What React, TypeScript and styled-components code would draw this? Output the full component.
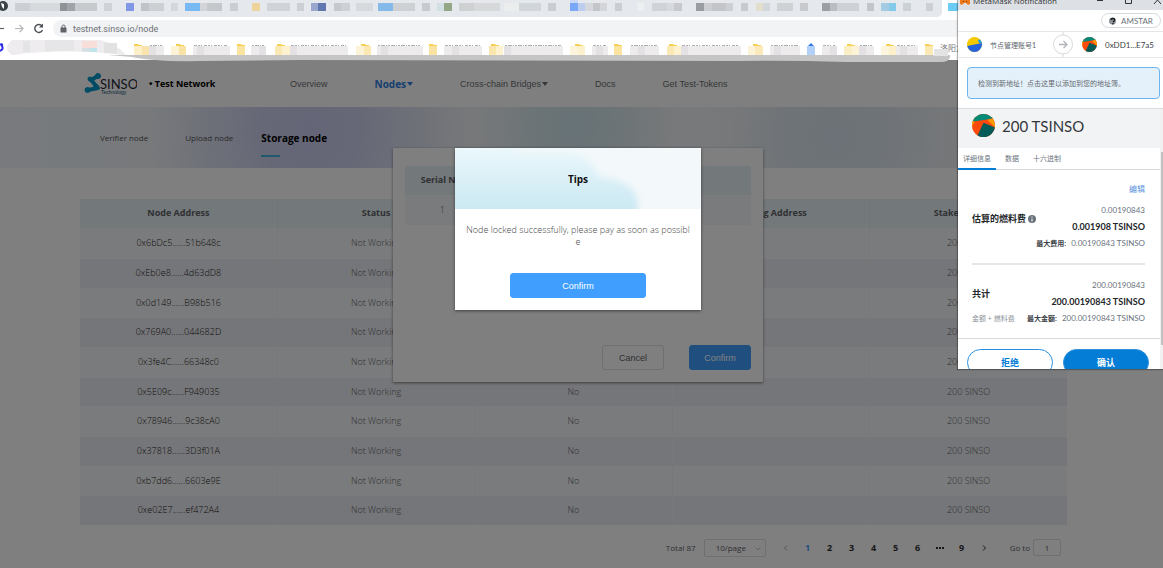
import React from "react";
import styled, { createGlobalStyle, css } from "styled-components";

const GlobalStyle = createGlobalStyle`
  * { box-sizing: border-box; }
  body {
    margin: 0;
    background: #fff;
    font-family: "Open Sans", "Noto Sans CJK SC", sans-serif;
    font-size: 9px;
    line-height: 12px;
    color: #606266;
  }
  button, input, select { font: inherit; color: inherit; margin: 0; }
  a { color: inherit; text-decoration: none; }
`;

const ui = `"Liberation Sans", Arial, sans-serif`;

/* ---------- shell ---------- */

const Screen = styled.div`
  position: relative;
  min-height: 100vh;
  display: flex;
  flex-direction: column;
  overflow: hidden;
`;

/* ---------- browser chrome ---------- */

const Chrome = styled.header`
  position: relative;
  height: 60px;
  display: flex;
  flex-direction: column;
  background: #fff;
`;

const TabStrip = styled.div`
  height: 17px;
  width: 81%;
  background: #e5e8ec;
  border-bottom-right-radius: 5px;
`;

const AddressRow = styled.div`
  display: flex;
  align-items: center;
  height: 17px;
  margin-top: 3px;
`;

const NavIcons = styled.div`
  width: 53px;
  height: 17px;
  flex: none;
`;

const AddressField = styled.label`
  flex: 1;
  display: flex;
  align-items: center;
  gap: 6px;
  height: 17px;
  padding-left: 7px;
  border-radius: 9px 0 0 9px;
  background: #f1f3f4;
`;

const Url = styled.input`
  width: 300px;
  border: 0;
  padding: 0;
  background: transparent;
  font-family: Roboto, sans-serif;
  color: #6d7074;
`;

const ChromeDrawing = styled.svg`
  position: absolute;
  left: 0;
  top: 0;
  pointer-events: none;
  z-index: 2;
`;

type Block = [number, number, string];

const tabBlocks: Block[] = [
  [15, 15, "#ccd0d4"], [30, 30, "#d7dadd"], [60, 7, "#8f9396"], [67, 8, "#a0a4a8"], [75, 22, "#c8cbce"],
  [104, 8, "#cfd2d6"], [126, 8, "#8297e6"], [141, 8, "#bfc4c9"], [149, 15, "#ccd0d3"], [171, 7, "#d5d7da"],
  [185, 15, "#78b8f3"], [200, 7, "#d3d5d9"], [207, 15, "#c4c8ca"], [230, 8, "#cbcdd0"], [252, 8, "#eed49a"],
  [267, 23, "#d0d3d7"], [297, 7, "#cccfd3"], [311, 7, "#9aa8cf"], [318, 8, "#6077b0"], [334, 7, "#c5c8cc"],
  [341, 9, "#ced1d4"], [356, 17, "#d7dadd"], [378, 15, "#84b9ea"], [393, 22, "#cdd1d4"], [422, 8, "#c8cbce"],
  [437, 7, "#d2dfe4"], [444, 8, "#93a786"], [459, 15, "#ced0d2"], [474, 26, "#d6d8da"], [504, 15, "#eceded"],
  [519, 22, "#d0d6da"], [548, 8, "#cbcdd1"], [570, 8, "#7aa8f8"], [578, 7, "#bccdf0"], [585, 8, "#d5d8dc"],
  [593, 7, "#c3c5c8"], [600, 7, "#d3d5d9"], [615, 7, "#cacdd1"], [637, 7, "#edeeef"], [652, 15, "#d0d4d9"],
  [667, 8, "#d7d9de"], [674, 8, "#c7c9cc"], [696, 8, "#999da2"], [704, 8, "#cbcdd1"], [712, 14, "#c3c5c9"],
  [726, 7, "#cecfd3"], [741, 7, "#c8cacf"], [756, 7, "#e3dfcf"], [763, 7, "#d2d7da"], [777, 16, "#cfd2d5"],
  [800, 8, "#c8cacd"], [822, 8, "#9b9fa3"], [830, 7, "#bbbdc1"], [837, 22, "#ced1d5"], [867, 7, "#c4c5c9"],
  [881, 8, "#a3cbe2"], [889, 7, "#84cbea"], [903, 8, "#cbd1d4"], [926, 7, "#cdd0d3"], [948, 10, "#6dccf5"],
];

const folders = [134, 176, 237, 277, 361, 429, 491, 575, 614, 669, 753, 847, 886, 925];

const folderMosaic: Block[] = [
  [134, 8, "#fdf0c8"], [142, 7, "#fae4ae"], [171, 8, "#fdf3d6"], [179, 7, "#f9e3a4"], [237, 8, "#fbe3a0"],
  [275, 7, "#fbe9b4"], [282, 8, "#fdf1cf"], [356, 8, "#fdf4d7"], [364, 7, "#fbe8b2"], [429, 8, "#fae3a2"],
  [489, 7, "#fbe7ae"], [496, 7, "#fdf1cf"], [570, 8, "#fdf4dc"], [578, 7, "#fdf0cc"], [614, 8, "#fbe3a0"],
  [667, 7, "#fbe9b4"], [674, 7, "#fdf1cf"], [748, 7, "#fdf3d6"], [755, 8, "#fbe9bb"], [807, 8, "#b2d0f8"],
  [844, 8, "#fbefc6"], [852, 7, "#fdf3d9"], [881, 8, "#fdf6df"], [889, 7, "#fdf0ca"], [925, 8, "#fbe9b3"],
];

const labelMosaic: [number, number][] = [
  [149, 15], [193, 37], [251, 15], [290, 58], [377, 46], [444, 38], [504, 59], [592, 16], [630, 29],
  [681, 60], [770, 30], [822, 15], [859, 15], [896, 22],
];

const BrowserDrawing = () => (
  <ChromeDrawing width="958" height="66" viewBox="0 0 958 66" aria-hidden="true">
    <circle cx="3" cy="6" r="5" fill="#3b4348" />
    <path d="M1 3l3 1v5l-2-2z" fill="#fff" />
    {tabBlocks.map(([x, w, c]) => (
      <rect key={x} x={x} y="3" width={w} height="8" fill={c} />
    ))}
    <rect x="570" y="0" width="8" height="3" fill="#c9d8f6" />
    <path d="M-1 45q4-2 3 1q2 4-3 5" stroke="#2b2bea" strokeWidth="2" fill="none" />
    <path d="M12 40H100q16 3 26 15H12q-10-7 0-15z" fill="#eeecee" />
    <rect x="23" y="41" width="7" height="11" fill="#e4e3e6" />
    <rect x="45" y="40" width="29" height="12" fill="#e6e5e7" />
    <rect x="82" y="41" width="15" height="7" fill="#f8ded9" />
    <rect x="82" y="48" width="8" height="4" fill="#d5dfe4" />
    <rect x="90" y="48" width="7" height="4" fill="#bfe4ea" />
    <rect x="104" y="43" width="13" height="12" fill="#e3e2e3" />
    <path d="M14 55q48-7 102-1q14 3 28 6H14z" fill="#fff" />
    <path d="M108 55H950v2q-1 5-9 5H846q-60-2-110-1L300 60l-100 1q-45 1-68-4z" fill="#c5c5c5" />
    {folders.map((x) => (
      <path key={x} d={`M${x} 47v-3h4l1 1h3v2z`} fill="#f6cf55" />
    ))}
    <path d="M807 47l4-4 4 4z" fill="#3579e8" />
    {folderMosaic.map(([x, w, c]) => (
      <rect key={x} x={x} y="46" width={w} height="9" fill={c} />
    ))}
    {labelMosaic.map(([x, w], i) => (
      <g key={x}>
        <path
          d={`M${x + 1} 45.500H${x + w - 2}`}
          stroke="#aeaeb1"
          strokeDasharray={i % 2 ? "3 1 2 1 1 2" : "2 1 4 1 1 1"}
        />
        <rect x={x} y="46" width={w} height="9" fill="#edebec" />
        <rect x={x + (i % 3) * 4} y="46" width="7" height="9" fill="#e3e1e3" />
      </g>
    ))}
    <text x="940" y="51" fontSize="8" fill="#77777a">洛阳大</text>
    <rect x="934" y="49" width="14" height="7" fill="#e4e3e4" />
  </ChromeDrawing>
);

/* ---------- site ---------- */

const Site = styled.main`
  position: relative;
  flex: 1;
  display: flex;
  flex-direction: column;
  background: #fff;
`;

const SiteHeader = styled.div`
  display: flex;
  align-items: center;
  height: 47px;
  padding-left: 84px;
`;

const NetworkName = styled.strong`
  width: 141px;
  margin-left: 12px;
  font-weight: 700;
  color: #000;
  white-space: nowrap;
`;

const Nav = styled.nav`
  display: flex;
  align-items: center;
  gap: 47px;
  font-family: ${ui};
`;

const NavLink = styled.a<{ $active?: boolean }>`
  display: flex;
  align-items: center;
  gap: 1px;
  white-space: nowrap;
  color: #6d6f72;
  ${(p) => p.$active && css`
    font-family: "Open Sans", sans-serif;
    font-size: 10px;
    font-weight: 700;
    color: #2f80e0;
  `}
`;

const Banner = styled.nav`
  display: flex;
  align-items: center;
  height: 61px;
  padding-left: 100px;
  background:
    radial-gradient(circle 160px at 310px 24px, #c8ccee 0, #cdd0ee 30%, transparent 100%),
    radial-gradient(circle 100px at 575px 20px, #cfe6ee 0, #d6e7ed 35%, transparent 100%),
    radial-gradient(circle 110px at 835px 30px, #dbe5f0 0, #dce6ef 40%, transparent 100%),
    linear-gradient(90deg, #f0f5fa, #ecf0f3 30%, #f0f2f4 60%, #e4eaf0);
`;

const BannerLink = styled.a<{ $active?: boolean }>`
  position: relative;
  margin-right: 37px;
  font-size: 8px;
  color: #555;
  white-space: nowrap;
  ${(p) => p.$active && css`
    margin-left: -9px;
    font-size: 10px;
    font-weight: 700;
    color: #000;
    &::after {
      content: "";
      position: absolute;
      left: 0;
      bottom: -13px;
      width: 19px;
      height: 2px;
      background: #40b4dc;
    }
  `}
`;

const Content = styled.section`
  padding: 31px 96px 0 80px;
`;

const DataTable = styled.table`
  width: 100%;
  table-layout: fixed;
  border-collapse: collapse;
  text-align: center;
`;

const Th = styled.th`
  height: 29px;
  padding: 0;
  font-weight: 700;
  color: #606266;
  background: #e6f0f6;
  white-space: nowrap;
  & + & { border-left: 1px solid #e2eaf0; }
`;

const Row = styled.tr`
  height: 30px;
  background: #f5f7f9;
  border-top: 1px solid #f8f9fb;
  &:nth-child(even) { background: #ebecf2; }
  &:nth-child(3n) { height: 29px; }
`;

const Td = styled.td<{ $strong?: boolean }>`
  padding: 0;
  font-weight: 300;
  color: ${(p) => (p.$strong ? "#222" : "#606266")};
  & + & { border-left: 1px solid #edf0f5; }
`;

const Pagination = styled.div`
  display: flex;
  align-items: center;
  justify-content: flex-end;
  height: 19px;
  margin-top: 13px;
  padding-right: 6px;
  font-size: 8px;
`;

const PageSize = styled.div`
  position: relative;
  margin: 0 9px 0 8px;
  svg { position: absolute; right: 5px; top: 7px; }
`;

const SizeSelect = styled.select`
  appearance: none;
  display: block;
  width: 62px;
  height: 18px;
  padding: 0 12px 0 11px;
  border: 1px solid #dcdfe6;
  border-radius: 2px;
  background: #fff;
`;

const PageButton = styled.button<{ $active?: boolean }>`
  width: 22px;
  height: 18px;
  padding: 0;
  border: 0;
  background: transparent;
  font-size: 9px;
  font-weight: 700;
  color: ${(p) => (p.$active ? "#409eff" : "#303133")};
`;

const Goto = styled.label`
  display: flex;
  align-items: center;
  gap: 3px;
  margin-left: 15px;
`;

const PageInput = styled.input`
  width: 28px;
  height: 17px;
  padding: 0;
  border: 1px solid #dcdfe6;
  border-radius: 2px;
  text-align: center;
`;

/* ---------- dialogs ---------- */

const Layer = styled.div`
  position: absolute;
  inset: 0;
  display: flex;
  justify-content: center;
  align-items: flex-start;
  padding: 88px 7px 0 0;
`;

const Shade = styled.div`
  position: absolute;
  inset: 0;
  background: rgba(0, 0, 0, 0.5);
`;

const OrderDialog = styled.section`
  display: flex;
  flex-direction: column;
  width: 370px;
  padding: 18px 12px 12px;
  background: #fff;
  border-radius: 1px;
  box-shadow: 0 1px 3px rgba(0, 0, 0, 0.5);
`;

const Actions = styled.div`
  display: flex;
  justify-content: flex-end;
  gap: 25px;
  margin-top: 120px;
`;

const Button = styled.button<{ $primary?: boolean; $wide?: boolean }>`
  width: ${(p) => (p.$wide ? "136px" : "62px")};
  height: 25px;
  padding: 0;
  border: 1px solid ${(p) => (p.$primary ? "#409eff" : "#dcdfe6")};
  border-radius: 3px;
  background: ${(p) => (p.$primary ? "#409eff" : "#fff")};
  color: ${(p) => (p.$primary ? "#fff" : "#606266")};
  font-family: ${ui};
`;

const TipsDialog = styled.section`
  width: 246px;
  padding-bottom: 12px;
  background: #fff;
  box-shadow: 0 1px 3px rgba(0, 0, 0, 0.5);
  display: flex;
  flex-direction: column;
  align-items: center;
`;

const TipsHead = styled.div`
  position: relative;
  width: 100%;
  height: 61px;
  display: flex;
  align-items: center;
  justify-content: center;
  background: #f3f8fa;
  svg { position: absolute; inset: 0; }
`;

const TipsTitle = styled.h2`
  position: relative;
  margin: 0;
  font-size: 10px;
  font-weight: 700;
  color: #111;
`;

const TipsText = styled.p`
  width: 226px;
  margin: 15px 0 25px;
  text-align: center;
  word-break: break-all;
  font-weight: 300;
  color: #444;
`;

/* ---------- wallet ---------- */

const Wallet = styled.aside`
  position: absolute;
  z-index: 5;
  top: 0;
  right: 0;
  width: 205px;
  height: 369px;
  overflow: hidden;
  display: flex;
  flex-direction: column;
  background: #fff;
  box-shadow: 0 0 1px 1px rgba(0, 0, 0, 0.3);
  font-family: Lato, "Noto Sans CJK SC", sans-serif;
  font-size: 8px;
  line-height: 10px;
  color: #6a737d;
`;

const TitleBar = styled.div`
  flex: none;
  display: flex;
  align-items: flex-start;
  height: 10px;
  padding-left: 2px;
  background: #dde1e6;
  color: #333;
  font-family: "Open Sans", sans-serif;
  svg { flex: none; }
`;

const WindowTitle = styled.span`
  flex: 1;
  margin: -4px 0 0 3px;
`;

const NetworkRow = styled.div`
  flex: none;
  display: flex;
  justify-content: flex-end;
  height: 21px;
  padding: 3px 2px 0 0;
`;

const NetworkPill = styled.button`
  display: flex;
  align-items: center;
  justify-content: center;
  gap: 5px;
  width: 60px;
  height: 15px;
  padding: 0;
  border: 1px solid #d6d9dc;
  border-radius: 8px;
  background: #fff;
`;

const AccountRow = styled.div`
  flex: none;
  display: flex;
  align-items: center;
  height: 27px;
  padding-left: 9px;
  border-top: 1px solid #e4e6e9;
  border-bottom: 1px solid #e4e6e9;
  svg { flex: none; }
`;

const AccountName = styled.span<{ $own?: boolean }>`
  width: ${(p) => (p.$own ? "63px" : "auto")};
  margin-left: 8px;
  color: ${(p) => (p.$own ? "#5d646b" : "#3c4248")};
  font-size: ${(p) => (p.$own ? "7px" : "8px")};
`;

const Recipient = styled.div`
  display: flex;
  align-items: center;
  margin-left: 9px;
`;

const Notice = styled.button`
  flex: none;
  height: 32px;
  margin: 9px 3px 9px 9px;
  padding: 0 10px;
  border: 1px solid #6cb4ee;
  border-radius: 4px;
  background: #e5f1fa;
  font-size: 7px;
  text-align: left;
  white-space: nowrap;
  color: #62686e;
`;

const Body = styled.div`
  flex: none;
  position: relative;
  border-top: 1px solid #d9dcdf;
`;

const ScrollTrack = styled.div`
  position: absolute;
  top: 0;
  right: 0;
  bottom: 0;
  width: 3px;
  padding: 43px 0 0 1px;
  background: #f1f1f1;
`;

const ScrollThumb = styled.div`
  height: 193px;
  background: #c1c1c1;
`;

const Amount = styled.div`
  display: flex;
  align-items: center;
  gap: 7px;
  height: 39px;
  padding: 0 0 6px 14px;
  background: #f2f3f5;
  font-size: 15px;
  line-height: 20px;
  color: #33373c;
`;

const Tabs = styled.div`
  display: flex;
  height: 22px;
  margin-right: 3px;
  border-bottom: 1px solid #d6d9dc;
  font-size: 7px;
`;

const Tab = styled.button<{ $active?: boolean }>`
  height: 22px;
  padding: 0 5px;
  margin-right: 4px;
  border: 0;
  border-bottom: 2px solid ${(p) => (p.$active ? "#037dd6" : "transparent")};
  background: transparent;
`;

const Details = styled.div`
  padding: 14px 18px 0 14px;
`;

const EditLink = styled.a`
  display: block;
  text-align: right;
  color: #5b93dc;
`;

const CostBlock = styled.div<{ $ruled?: boolean }>`
  display: grid;
  grid-template-columns: auto 1fr;
  grid-template-rows: 16px 17px 16px;
  align-items: center;
  margin-top: ${(p) => (p.$ruled ? "8px" : "12px")};
  padding-bottom: 12px;
  text-align: right;
  white-space: nowrap;
  ${(p) => p.$ruled && css`border-bottom: 2px solid #e4e6e9;`}
`;

const CostLabel = styled.div`
  grid-row: 1 / 3;
  display: flex;
  align-items: center;
  gap: 2px;
  font-size: 9px;
  font-weight: 700;
  color: #24272a;
`;

const CostTotal = styled.strong`
  grid-column: 2;
  font-size: 9px;
  color: #24272a;
`;

const CostSide = styled.span`
  grid-column: 1;
  font-size: 7px;
  color: #8b9299;
`;

const CostMax = styled.span`
  grid-column: 2;
  b { margin-right: 5px; font-size: 7px; color: #3c4248; }
`;

const WalletActions = styled.div`
  display: flex;
  gap: 10px;
  padding: 10px 14px 8px 9px;
  border-top: 1px solid #d6d9dc;
`;

const RoundButton = styled.button<{ $primary?: boolean }>`
  flex: 1;
  height: 27px;
  padding: 0;
  border: 1px solid #2b8fdd;
  border-radius: 14px;
  background: ${(p) => (p.$primary ? "#037dd6" : "#fff")};
  color: ${(p) => (p.$primary ? "#fff" : "#037dd6")};
  font-size: 9px;
  font-weight: 700;
`;

/* ---------- drawings ---------- */

const Logo = () => (
  <svg width="53" height="24" viewBox="0 0 53 24" role="img" aria-label="SINSO Technology">
    <g fill="#0098c8" stroke="#0098c8">
      <path d="M14 4L7 8l7 8-10 2" fill="none" strokeWidth="4" strokeLinejoin="round" />
      <circle cx="14" cy="4" r="2.500" />
      <circle cx="6" cy="7" r="2" />
      <circle cx="12" cy="15" r="2.500" />
      <circle cx="3.500" cy="18" r="2.500" />
    </g>
    <text x="16" y="17" fontSize="13" fontFamily="Lato, sans-serif" fill="#1d2733">SINSO</text>
    <text x="17" y="22" fontSize="5" fontFamily="Liberation Sans, sans-serif" fill="#0f4f78">Technology</text>
  </svg>
);

const Caret = () => (
  <svg width="6" height="4" viewBox="0 0 6 4" aria-hidden="true">
    <path d="M0 0h6L3 4z" fill="currentColor" />
  </svg>
);

const Chevron = ({ d, color }: { d: string; color: string }) => (
  <svg width="6" height="6" viewBox="0 0 6 6" aria-hidden="true">
    <path d={d} fill="none" stroke={color} />
  </svg>
);

const SunsetIcon = ({ size }: { size: number }) => (
  <svg width={size} height={size} viewBox="0 0 24 24" aria-hidden="true">
    <clipPath id={`disc${size}`}><circle cx="12" cy="12" r="12" /></clipPath>
    <g clipPath={`url(#disc${size})`}>
      <rect width="24" height="24" fill="#fb4a0b" />
      <path d="M16 6l8-2v10z" fill="#f99a05" />
      <path d="M0 0h24v4L14 6 0 8z" fill="#068a78" />
      <path d="M0 7l3 1-3 5z" fill="#f99a05" />
      <path d="M12 9l12 5v10H5z" fill="#055b58" />
    </g>
  </svg>
);

const OwnerIcon = () => (
  <svg width="15" height="15" viewBox="0 0 15 15" aria-hidden="true">
    <clipPath id="owner"><circle cx="7.5" cy="7.5" r="7.5" /></clipPath>
    <g clipPath="url(#owner)">
      <rect width="15" height="15" fill="#f5c800" />
      <path d="M0 9l15-3v9H0z" fill="#2463e0" />
      <path d="M11 3l4-1v4l-3 0z" fill="#18a0e8" />
    </g>
  </svg>
);

/* ---------- data ---------- */

const nodes = [
  "0x6bDc5......51b648c", "0xEb0e8......4d63dD8", "0x0d149......B98b516", "0x769A0......044682D",
  "0x3fe4C......66348c0", "0x5E09c......F949035", "0x78946......9c38cA0", "0x37818......3D3f01A",
  "0xb7dd6......6603e9E", "0xe02E7......ef472A4",
];

export default function App() {
  return (
    <Screen>
      <GlobalStyle />
      <Chrome>
        <TabStrip />
        <AddressRow>
          <NavIcons>
            <svg width="53" height="17" viewBox="0 0 53 17" fill="none" aria-hidden="true">
              <path d="M0 8.500h4" stroke="#5f6368" strokeWidth="1.200" />
              <path d="M15 8.500h8M19.500 5l3.500 3.500-3.500 3.500" stroke="#b4b6b9" strokeWidth="1.200" />
              <path d="M42 6a4 4 0 1 0 .5 4" stroke="#4a4e52" strokeWidth="1.400" />
              <path d="M43 3.500v4h-4z" fill="#4a4e52" />
            </svg>
          </NavIcons>
          <AddressField>
            <svg width="7" height="9" viewBox="0 0 7 9" aria-hidden="true">
              <rect x="0.500" y="3.500" width="6" height="5" rx="0.500" fill="#5f6368" />
              <path d="M2 4V2.500a1.500 1.500 0 0 1 3 0V4" fill="none" stroke="#5f6368" />
            </svg>
            <Url aria-label="Address" defaultValue="testnet.sinso.io/node" />
          </AddressField>
        </AddressRow>
        <BrowserDrawing />
      </Chrome>

      <Site>
        <SiteHeader>
          <Logo />
          <NetworkName>• Test Network</NetworkName>
          <Nav>
            <NavLink href="#">Overview</NavLink>
            <NavLink href="#" $active>Nodes<Caret /></NavLink>
            <NavLink href="#">Cross-chain Bridges<Caret /></NavLink>
            <NavLink href="#">Docs</NavLink>
            <NavLink href="#">Get Test-Tokens</NavLink>
          </Nav>
        </SiteHeader>
        <Banner>
          <BannerLink href="#">Verifier node</BannerLink>
          <BannerLink href="#">Upload node</BannerLink>
          <BannerLink href="#" $active>Storage node</BannerLink>
        </Banner>
        <Content>
          <DataTable>
            <thead>
              <tr>
                <Th>Node Address</Th>
                <Th>Status</Th>
                <Th>Locked</Th>
                <Th>Staking Address</Th>
                <Th>Staked Amount</Th>
              </tr>
            </thead>
            <tbody>
              {nodes.map((n) => (
                <Row key={n}>
                  <Td $strong>{n}</Td>
                  <Td>Not Working</Td>
                  <Td>No</Td>
                  <Td />
                  <Td>200 SINSO</Td>
                </Row>
              ))}
            </tbody>
          </DataTable>
          <Pagination>
            <span>Total 87</span>
            <PageSize>
              <SizeSelect aria-label="Rows per page"><option>10/page</option></SizeSelect>
              <Chevron d="M0.500 1.500L3 4l2.500-2.500" color="#c0c4cc" />
            </PageSize>
            <PageButton aria-label="Previous page"><Chevron d="M4 0.500L1.500 3 4 5.500" color="#a8abb2" /></PageButton>
            {["1", "2", "3", "4", "5", "6", "•••", "9"].map((p) => (
              <PageButton key={p} $active={p === "1"}>
                {p === "•••" ? (
                  <svg width="8" height="6" viewBox="0 0 8 6" aria-label="More pages">
                    <path d="M0 3h2M3 3h2M6 3h2" stroke="#303133" strokeWidth="2" />
                  </svg>
                ) : p}
              </PageButton>
            ))}
            <PageButton aria-label="Next page"><Chevron d="M2 0.500L4.500 3 2 5.500" color="#303133" /></PageButton>
            <Goto>Go to<PageInput defaultValue="1" /></Goto>
          </Pagination>
        </Content>

        <Layer>
          <OrderDialog>
            <DataTable>
              <colgroup>
                <col style={{ width: "75px" }} />
                <col />
              </colgroup>
              <thead><tr><Th>Serial No.</Th><Th /></tr></thead>
              <tbody><Row><Td>1</Td><Td /></Row></tbody>
            </DataTable>
            <Actions>
              <Button>Cancel</Button>
              <Button $primary>Confirm</Button>
            </Actions>
          </OrderDialog>
        </Layer>
        <Shade />
        <Layer>
          <TipsDialog role="dialog" aria-label="Tips">
            <TipsHead>
              <svg width="246" height="61" viewBox="0 0 246 61" aria-hidden="true">
                <defs>
                  <linearGradient id="sky" x1="0" y1="0" x2="0" y2="1">
                    <stop offset="0" stopColor="#f0fafc" />
                    <stop offset="0.7" stopColor="#d2ecf5" />
                    <stop offset="1" stopColor="#c9e7f2" />
                  </linearGradient>
                  <filter id="soft"><feGaussianBlur stdDeviation="3" /></filter>
                </defs>
                <path
                  d="M-10-10H60V4h52q24 3 32 25q37 2 39 28v14H-10z"
                  fill="url(#sky)"
                  filter="url(#soft)"
                />
              </svg>
              <TipsTitle>Tips</TipsTitle>
            </TipsHead>
            <TipsText>Node locked successfully, please pay as soon as possible</TipsText>
            <Button $primary $wide>Confirm</Button>
          </TipsDialog>
        </Layer>
      </Site>

      <Wallet>
        <TitleBar>
          <svg width="10" height="5" viewBox="0 0 10 5" aria-hidden="true">
            <path d="M0 0h10v4l-2 1-2-2H4L2 5 0 4z" fill="#ee7a1c" />
            <path d="M3 1l1 1M7 1L6 2" stroke="#7a3a12" />
          </svg>
          <WindowTitle>MetaMask Notification</WindowTitle>
          <svg width="70" height="5" viewBox="0 0 70 5" fill="none" stroke="#333" aria-hidden="true">
            <path d="M4 0.500h6M32.500 0v3.500h6V0M61 4l3.500-4L68 4" />
          </svg>
        </TitleBar>
        <NetworkRow>
          <NetworkPill>
            <svg width="7" height="8" viewBox="0 0 7 8" aria-hidden="true">
              <circle cx="3.500" cy="4" r="3.500" fill="#8d949b" />
              <path d="M2 3q0-1.500 2-1.500t1.500 2L4 5M4 6v1.500" stroke="#16181b" strokeWidth="1.300" fill="none" />
            </svg>
            AMSTAR
          </NetworkPill>
        </NetworkRow>
        <AccountRow>
          <OwnerIcon />
          <AccountName $own>节点管理账号1</AccountName>
          <svg width="20" height="25" viewBox="0 0 20 25" fill="none" aria-hidden="true">
            <path d="M10 0v25" stroke="#d6d9dc" />
            <circle cx="10" cy="12.500" r="9.500" fill="#fff" stroke="#d6d9dc" />
            <path d="M6 12.500h8M10.500 9l3.500 3.500-3.500 3.500" stroke="#b0b5ba" strokeWidth="1.300" />
          </svg>
          <Recipient>
            <SunsetIcon size={15} />
            <AccountName>0xDD1...E7a5</AccountName>
          </Recipient>
        </AccountRow>
        <Notice>检测到新地址！点击这里以添加到您的地址簿。</Notice>
        <Body>
          <Amount><SunsetIcon size={23} />200 TSINSO</Amount>
          <Tabs>
            <Tab $active>详细信息</Tab>
            <Tab>数据</Tab>
            <Tab>十六进制</Tab>
          </Tabs>
          <Details>
            <EditLink href="#">编辑</EditLink>
            <CostBlock $ruled>
              <CostLabel>
                估算的燃料费
                <svg width="8" height="8" viewBox="0 0 8 8" aria-hidden="true">
                  <circle cx="4" cy="4" r="4" fill="#6a737d" />
                  <path d="M4 1.500v1M4 3.500v3" stroke="#fff" />
                </svg>
              </CostLabel>
              <span>0.00190843</span>
              <CostTotal>0.001908 TSINSO</CostTotal>
              <CostMax><b>最大费用:</b>0.00190843 TSINSO</CostMax>
            </CostBlock>
            <CostBlock>
              <CostLabel>共计</CostLabel>
              <span>200.00190843</span>
              <CostTotal>200.00190843 TSINSO</CostTotal>
              <CostSide>金额 + 燃料费</CostSide>
              <CostMax><b>最大金额:</b>200.00190843 TSINSO</CostMax>
            </CostBlock>
          </Details>
          <WalletActions>
            <RoundButton>拒绝</RoundButton>
            <RoundButton $primary>确认</RoundButton>
          </WalletActions>
          <ScrollTrack><ScrollThumb /></ScrollTrack>
        </Body>
      </Wallet>
    </Screen>
  );
}
